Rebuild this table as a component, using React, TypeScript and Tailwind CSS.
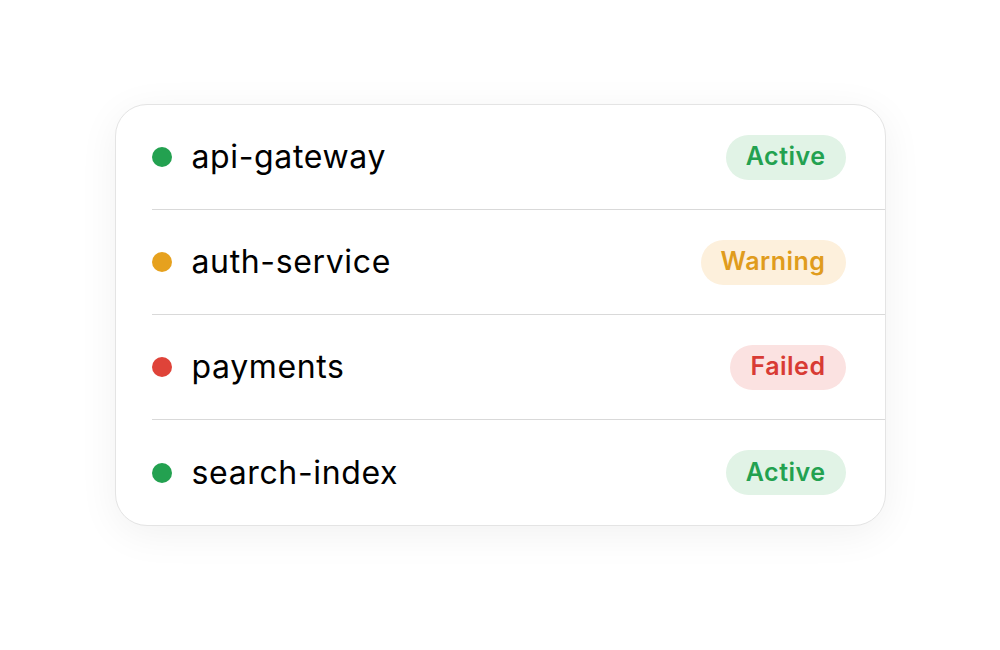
const services = [
  { name: "api-gateway", status: "Active" },
  { name: "auth-service", status: "Warning" },
  { name: "payments", status: "Failed" },
  { name: "search-index", status: "Active" },
];

const dotColor: Record<string, string> = {
  Active: "bg-[#23a150]",
  Warning: "bg-[#e6a11e]",
  Failed: "bg-[#df4339]",
};

const badgeColor: Record<string, string> = {
  Active: "bg-[#e1f3e6] text-[#23a150]",
  Warning: "bg-[#fdf0dc] text-[#e09c1d]",
  Failed: "bg-[#fbe2e1] text-[#d83b34]",
};

export default function App() {
  return (
    <div className="flex h-[650px] w-[1000px] justify-center bg-white pt-[104px] font-['Inter','Liberation_Sans',sans-serif]">
      <div className="h-fit w-[771px] overflow-hidden rounded-[32px] border-[1.5px] border-[#e4e4e4] bg-white shadow-[0_8px_40px_rgba(0,0,0,0.06)]">
        {services.map((s, i) => (
          <div key={s.name} className="pl-[36px]">
            <div
              className={
                "flex h-[105px] items-center pr-[39px] " +
                (i < services.length - 1 ? "border-b border-[#d9d9d9]" : "")
              }
            >
              <span className={"h-[20px] w-[20px] rounded-full " + dotColor[s.status]} />
              <span className="ml-[20px] text-[32px] leading-none tracking-[0.02em] text-black">{s.name}</span>
              <span
                className={
                  "ml-auto flex h-[45px] items-center rounded-full px-[20px] text-[25px] font-semibold tracking-[0.02em] " +
                  badgeColor[s.status]
                }
              >
                {s.status}
              </span>
            </div>
          </div>
        ))}
      </div>
    </div>
  );
}
